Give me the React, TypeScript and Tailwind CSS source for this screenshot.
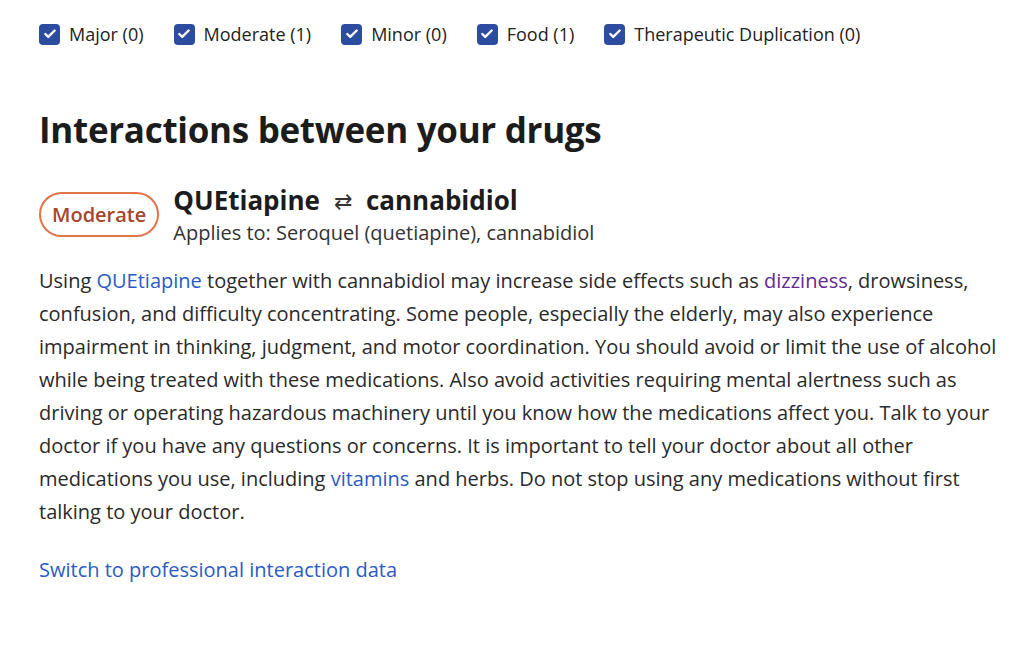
import { Check } from "lucide-react";

const filters = [
  { label: "Major", count: 0 },
  { label: "Moderate", count: 1 },
  { label: "Minor", count: 0 },
  { label: "Food", count: 1 },
  { label: "Therapeutic Duplication", count: 0 },
];

const FilterBox = ({ label, count }: { label: string; count: number }) => (
  <label className="flex items-center gap-[9px] cursor-pointer">
    <span className="flex items-center justify-center w-[21px] h-[21px] rounded-[4px] bg-[#2b4c9f]">
      <Check className="w-[14px] h-[14px] text-white" strokeWidth={4} />
    </span>
    <span className="text-[18px] text-[#222]">
      {label} ({count})
    </span>
  </label>
);

export default function App() {
  return (
    <div
      className="bg-white min-h-screen px-[39px] pt-[22px] text-[#222]"
      style={{ fontFamily: '"Open Sans", "Noto Sans", sans-serif' }}
    >
      <div className="flex items-center gap-[30px] h-[24px]">
        {filters.map((f) => (
          <FilterBox key={f.label} label={f.label} count={f.count} />
        ))}
      </div>

      <h2 className="mt-[62px] text-[35px] leading-[44px] font-bold text-[#1c1c1c] tracking-[-0.3px]">
        Interactions between your drugs
      </h2>

      <div className="mt-[32px] flex items-start gap-[14px]">
        <span className="mt-[8px] flex items-center justify-center h-[45px] px-[11px] rounded-full border-2 border-[#e0754a] text-[20px] font-semibold text-[#a6472b]">
          Moderate
        </span>
        <div>
          <h3 className="flex items-center text-[26px] leading-[32px] font-bold text-[#1c1c1c]">
            QUEtiapine
            <span className="font-normal text-[22px] mx-[14px] text-[#333]">⇄</span>
            cannabidiol
          </h3>
          <p className="mt-[2px] text-[20px] leading-[30px] text-[#333]">Applies to: Seroquel (quetiapine), cannabidiol</p>
        </div>
      </div>

      <p className="mt-[16px] w-[975px] text-[20px] leading-[33px] text-[#2a2a2a]">
        Using <a className="text-[#2a5bc4]">QUEtiapine</a> together with cannabidiol may increase side effects such as{" "}
        <a className="text-[#63298f]">dizziness</a>, drowsiness, confusion, and difficulty concentrating. Some people,
        especially the elderly, may also experience impairment in thinking, judgment, and motor coordination. You should
        avoid or limit the use of alcohol while being treated with these medications. Also avoid activities requiring
        mental alertness such as driving or operating hazardous machinery until you know how the medications affect you.
        Talk to your doctor if you have any questions or concerns. It is important to tell your doctor about all other
        medications you use, including <a className="text-[#2a5bc4]">vitamins</a> and herbs. Do not stop using any
        medications without first talking to your doctor.
      </p>

      <a className="block mt-[28px] text-[20px] leading-[28px] text-[#2a5bc4]">Switch to professional interaction data</a>
    </div>
  );
}
